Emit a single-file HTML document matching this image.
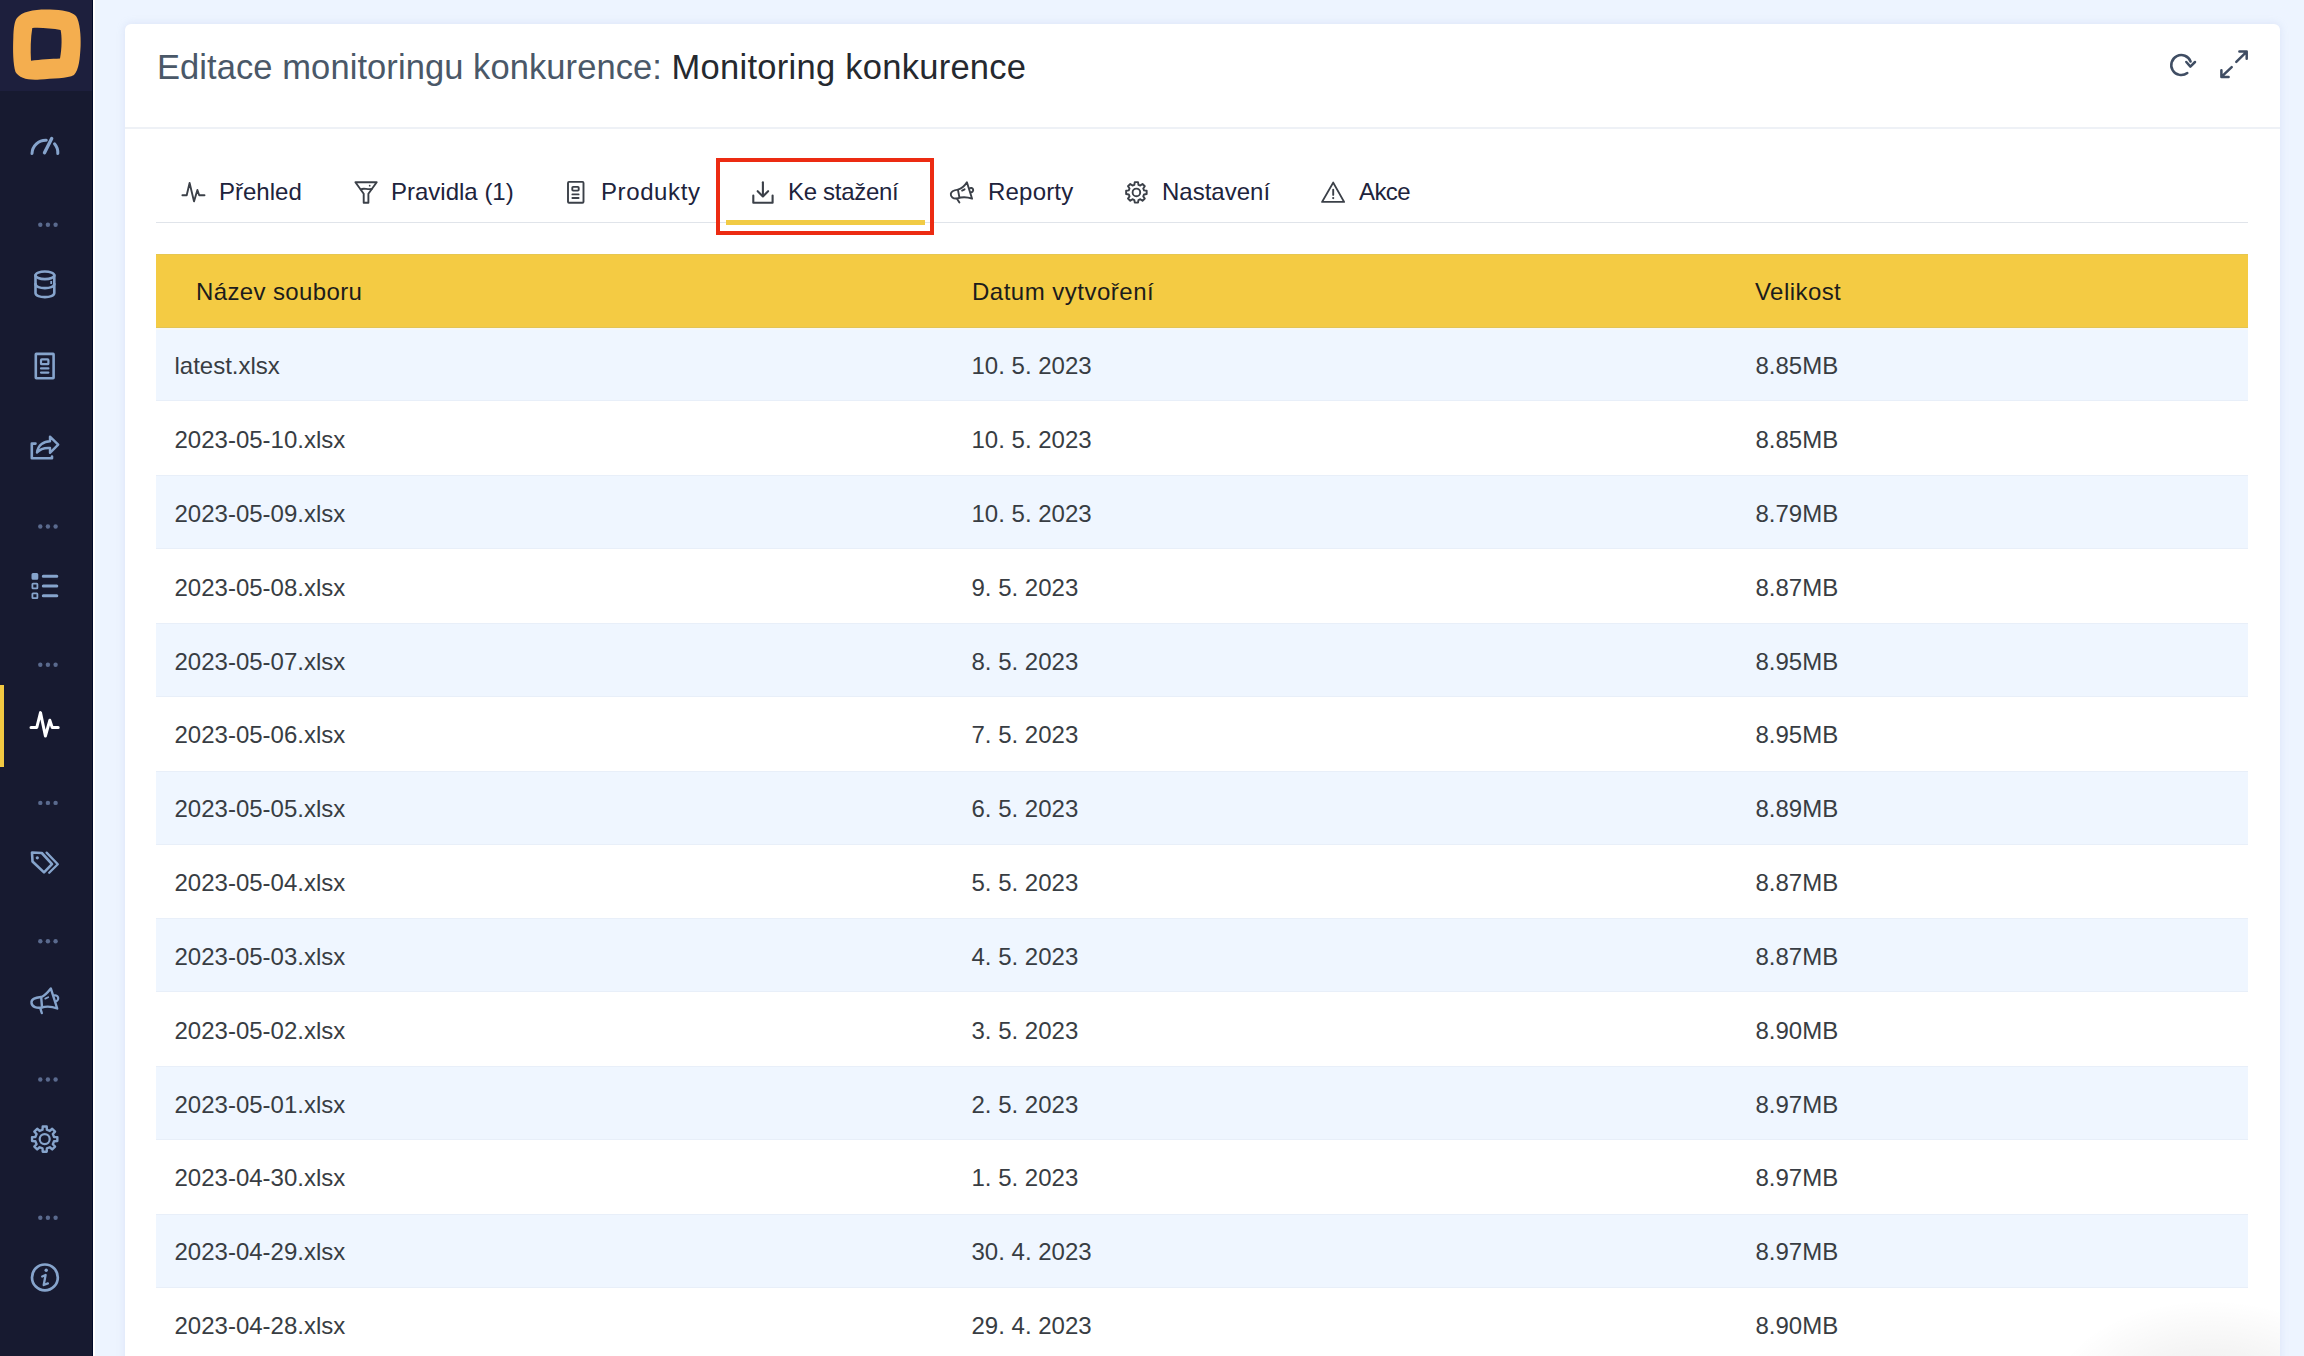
<!DOCTYPE html>
<html><head><meta charset="utf-8">
<style>
*{margin:0;padding:0;box-sizing:border-box}
html,body{width:2304px;height:1356px;overflow:hidden}
body{background:#edf4ff;font-family:"Liberation Sans",sans-serif;position:relative}
.abs{position:absolute}
#side{left:0;top:0;width:93px;height:1356px;background:#171a30}
#logoarea{left:0;top:0;width:93px;height:91px;background:#1d1f3d}
#sideedge{left:92px;top:0;width:1px;height:1356px;background:#000a2a}
#sidewhite{left:93px;top:0;width:2px;height:1356px;background:#ffffff}
#card{left:125px;top:24px;width:2155px;height:1400px;background:#fff;border-radius:6px;box-shadow:0 0 9px rgba(150,170,215,.22)}
#hdrline{left:125px;top:127px;width:2155px;height:2px;background:#eef1f6}
.title{left:157px;top:45px;font-size:34.5px;line-height:44px;white-space:pre;color:#4a5868;letter-spacing:0.08px}
.title b{font-weight:normal;color:#25292f;letter-spacing:0.27px}
.tab{top:176.5px;font-size:24px;line-height:30px;color:#20233c;white-space:pre}
#tabline{left:156px;top:221.5px;width:2092px;height:1.5px;background:#e0e4ea}
#tabul{left:726px;top:220px;width:199px;height:4.5px;background:#f1cb45}
#redbox{left:716px;top:158px;width:218px;height:77px;border:4px solid #ec2b12}
#thead{left:156px;top:254px;width:2092px;height:74px;background:#f4cb43;border-top:1px solid #e6c750;border-bottom:1px solid #e3c452}
.th{top:277px;font-size:24px;line-height:30px;color:#1c1c1c;white-space:pre}
.row{left:156px;width:2092px;height:73.85px}
.row.s{background:#eff6ff;border-top:1px solid #e8eff9;border-bottom:1px solid #e8eff9}
.td{font-size:24px;line-height:30px;color:#383d43;white-space:pre}
</style></head><body>
<div id="side" class="abs"></div>
<div id="logoarea" class="abs"></div>
<div id="sideedge" class="abs"></div>
<div id="sidewhite" class="abs"></div>
<svg class="abs" style="left:0;top:0" width="93" height="1356" viewBox="0 0 93 1356">
<!-- logo -->
<path fill="#f4ae4f" fill-rule="evenodd" d="M17,18 C22,11 36,9 50,9.5 C62,10 72,11.5 76,16 C80,22 81,36 80.6,46 C80,58 79,70 74,75 C68,78.5 52,78.5 40,79.5 C28,80.5 19,78 15.5,72 C13,64 12.8,50 13.3,38 C13.6,28 14.5,21 17,18 Z M32.3,28 C40,27.3 52,28.5 60.6,30 C62,36 62,48 60,58.5 C52,58.8 40,59.5 31,60.8 C30.4,50 30.6,38 32.3,28 Z"/>
<g fill="none" stroke="#86a4cc" stroke-width="3" stroke-linecap="round" stroke-linejoin="round">
<!-- speedometer -->
<path d="M32,153.5 A13.8,13.8 0 0 1 46.3,140.3"/>
<path d="M54.5,143.8 A13.8,13.8 0 0 1 57.8,153.5"/>
<path d="M44.5,152.8 L51.7,138.6" stroke-width="3.4"/>
</g>
<g fill="none" stroke="#86a4cc" stroke-width="2.6" stroke-linecap="round" stroke-linejoin="round">
<!-- database -->
<ellipse cx="44.9" cy="275.3" rx="9.4" ry="3.8"/>
<path d="M35.5,275.3 V293 C35.5,298.5 54.3,298.5 54.3,293 V275.3"/>
<path d="M35.5,284 C35.5,289.5 54.3,289.5 54.3,284"/>
<rect x="50.3" y="281" width="1.8" height="3" fill="#86a4cc" stroke="none"/>
<!-- document -->
<rect x="35.8" y="353.9" width="17.8" height="24.3" rx="0.5"/>
<rect x="41" y="359.4" width="7.4" height="4.8" rx="0.8" stroke-width="2.2"/>
<path d="M41,368.4 H48.4 M41,372.6 H48.4" stroke-width="2.2"/>
<!-- share -->
<path d="M35.5,443.6 H31.8 V458.2 H52 V456.5"/>
<path d="M37,452.6 C38,445 44,441.2 50,441.2 V436.6 L58.2,444.6 L50,452.8 V448 C44.5,447.6 40,449 37,452.6 Z" stroke-width="2.4"/>
<!-- list -->
<rect x="32.4" y="574" width="5" height="4.8" rx="0.6" fill="#86a4cc" stroke-width="1.8"/>
<rect x="32.4" y="583.6" width="5" height="4.8" rx="0.6" stroke-width="1.8"/>
<rect x="32.4" y="593.3" width="5" height="4.8" rx="0.6" stroke-width="1.8"/>
<path d="M43.3,576.3 H56.8 M43.3,586.1 H56.8 M43.3,595.8 H56.8" stroke-width="3"/>
<!-- tags -->
<path d="M32,852.5 L41.8,853 L52,864.2 L44,872.4 L32.5,861.5 Z"/>
<circle cx="37.3" cy="857.8" r="1.6" fill="#86a4cc" stroke="none"/>
<path d="M46.6,852.6 L57.8,864.3 L49.2,872.8" stroke-width="2.3"/>
<!-- megaphone -->
<path d="M41.2,997 C45,995.5 48,992 50.8,988.4 L57.2,1008.5 C52,1006.5 46,1006.3 41.5,1007.5 C37,1008.5 32,1007 31.5,1003 C31,998.5 36,997.8 41.2,997 Z" stroke-width="2.4"/>
<path d="M41.2,997.2 L42,1007.2" stroke-width="2.4"/>
<path d="M40.5,1008.8 L41.8,1013" stroke-width="2.4"/>
<path d="M54.6,995.4 A2.6,2.6 0 1 1 55.8,1001.3" stroke-width="2.2"/>
<path d="M45.3,998.6 L48.2,997.2" stroke-width="1.8"/>
<!-- gear -->
<circle cx="44.7" cy="1139.1" r="5" stroke-width="2.2"/>
<!-- info -->
<circle cx="44.9" cy="1277.4" r="12.9" stroke-width="2.7"/>
<circle cx="46.2" cy="1270.2" r="1.7" fill="#86a4cc" stroke="none"/>
<path d="M42.2,1276.5 L45.6,1275 L43.7,1285 L47.9,1283.4" stroke-width="2.3"/>
</g>
<!-- gear outer -->
<path id="gearp" fill="none" stroke="#86a4cc" stroke-width="2.4" stroke-linejoin="round" d="M42.54,1129.75 L42.70,1126.46 L46.70,1126.46 L46.86,1129.75 L49.79,1130.96 L52.22,1128.74 L55.06,1131.58 L52.84,1134.01 L54.05,1136.94 L57.34,1137.10 L57.34,1141.10 L54.05,1141.26 L52.84,1144.19 L55.06,1146.62 L52.22,1149.46 L49.79,1147.24 L46.86,1148.45 L46.70,1151.74 L42.70,1151.74 L42.54,1148.45 L39.61,1147.24 L37.18,1149.46 L34.34,1146.62 L36.56,1144.19 L35.35,1141.26 L32.06,1141.10 L32.06,1137.10 L35.35,1136.94 L36.56,1134.01 L34.34,1131.58 L37.18,1128.74 L39.61,1130.96 Z"/>
<!-- active bar + pulse -->
<rect x="0" y="685" width="4" height="82" fill="#f2c942"/>
<path d="M31,727.4 H36.8 L40.5,712.6 L45.4,736 L49.8,720.3 L52.2,727.4 H58.2" fill="none" stroke="#ffffff" stroke-width="3" stroke-linecap="round" stroke-linejoin="round"/>
<!-- dots -->
<g fill="#5a6a8e"><circle cx="40.3" cy="224.7" r="2.2"/><circle cx="47.9" cy="224.7" r="2.2"/><circle cx="55.6" cy="224.7" r="2.2"/><circle cx="40.3" cy="526.5" r="2.2"/><circle cx="47.9" cy="526.5" r="2.2"/><circle cx="55.6" cy="526.5" r="2.2"/><circle cx="40.3" cy="664.7" r="2.2"/><circle cx="47.9" cy="664.7" r="2.2"/><circle cx="55.6" cy="664.7" r="2.2"/><circle cx="40.3" cy="802.9" r="2.2"/><circle cx="47.9" cy="802.9" r="2.2"/><circle cx="55.6" cy="802.9" r="2.2"/><circle cx="40.3" cy="941.3" r="2.2"/><circle cx="47.9" cy="941.3" r="2.2"/><circle cx="55.6" cy="941.3" r="2.2"/><circle cx="40.3" cy="1079.5" r="2.2"/><circle cx="47.9" cy="1079.5" r="2.2"/><circle cx="55.6" cy="1079.5" r="2.2"/><circle cx="40.3" cy="1217.7" r="2.2"/><circle cx="47.9" cy="1217.7" r="2.2"/><circle cx="55.6" cy="1217.7" r="2.2"/></g>
</svg>

<div id="card" class="abs"></div>
<div id="hdrline" class="abs"></div>
<div class="abs" style="left:1900px;top:1200px;width:380px;height:156px;overflow:hidden"><div style="position:absolute;left:150px;top:100px;width:320px;height:200px;border-radius:50%;background:radial-gradient(closest-side,rgba(0,0,0,0.07),rgba(0,0,0,0.045) 50%,rgba(0,0,0,0))"></div></div>
<div class="abs title">Editace monitoringu konkurence: <b>Monitoring konkurence</b></div>

<!-- TABS -->
<div id="tabline" class="abs"></div>
<div id="tabul" class="abs"></div>
<div class="abs tab" style="left:219px">Přehled</div>
<div class="abs tab" style="left:391px">Pravidla (1)</div>
<div class="abs tab" style="left:601px;letter-spacing:0.6px">Produkty</div>
<div class="abs tab" style="left:788px;letter-spacing:-0.3px">Ke stažení</div>
<div class="abs tab" style="left:988px;letter-spacing:0.2px">Reporty</div>
<div class="abs tab" style="left:1162px">Nastavení</div>
<div class="abs tab" style="left:1359px;letter-spacing:-0.6px">Akce</div>
<div id="redbox" class="abs"></div>
<svg class="abs" style="left:0;top:0" width="2304" height="260" viewBox="0 0 2304 260">
<g fill="none" stroke="#3b4048" stroke-width="1.9" stroke-linecap="round" stroke-linejoin="round">
<!-- pulse -->
<path d="M182.4,195.2 H186.7 L189.6,183 L194,201.4 L197.4,190 L199.2,195.2 H204.5"/>
<!-- funnel -->
<path d="M355.4,182.2 H376.7 L368.4,193.8 V202.7 H363.7 V193.8 Z"/>
<path d="M360.8,189.3 C364,187.8 366.5,189.6 371.6,189"/>
<circle cx="369.7" cy="185.7" r="0.9" fill="#3b4048" stroke="none"/>
<!-- doc -->
<rect x="568" y="181.9" width="15.5" height="20.9" rx="1"/>
<rect x="572.3" y="186.9" width="6.4" height="3.7" rx="0.8"/>
<path d="M572.4,194.4 H578.6 M572.4,198 H578.6"/>
<!-- download -->
<path d="M762.9,182.2 V196" stroke-width="2.1"/>
<path d="M757.7,191.2 L762.9,196.4 L768.1,191.2" stroke-width="2.1"/>
<path d="M753.3,195.6 V202.7 H772.6 V195.6" stroke-width="2.1"/>
<!-- megaphone -->
<g transform="translate(950,181)">
<path d="M7.9,8.6 C11,7.8 14.5,5 16.9,1.2 L22.1,17.7 C17.5,16 12,15.8 7.5,17.3 C3,18.3 0.5,15.5 0.8,12.8 C1.2,10 4.5,9 7.9,8.6 Z"/>
<path d="M7.9,8.6 L9.4,16.4 M7.3,18.2 L9.4,21.5 M12.1,9.6 L14.6,8.3"/>
<path d="M19.6,7.4 A2.2,2.2 0 1 1 20.9,11.3"/>
</g>
<!-- gear -->
<path d="M1134.36,184.77 L1134.77,182.13 L1138.03,182.13 L1138.44,184.77 L1140.35,185.56 L1142.51,183.99 L1144.81,186.29 L1143.24,188.45 L1144.03,190.36 L1146.67,190.77 L1146.67,194.03 L1144.03,194.44 L1143.24,196.35 L1144.81,198.51 L1142.51,200.81 L1140.35,199.24 L1138.44,200.03 L1138.03,202.67 L1134.77,202.67 L1134.36,200.03 L1132.45,199.24 L1130.29,200.81 L1127.99,198.51 L1129.56,196.35 L1128.77,194.44 L1126.13,194.03 L1126.13,190.77 L1128.77,190.36 L1129.56,188.45 L1127.99,186.29 L1130.29,183.99 L1132.45,185.56 Z"/>
<circle cx="1136.4" cy="192.4" r="3.8"/>
<!-- warning -->
<path d="M1333.2,182.6 L1344.1,201.9 H1322.1 Z"/>
<path d="M1333.2,189.7 V194.9"/>
<circle cx="1333.2" cy="198.1" r="1.1" fill="#3b4048" stroke="none"/>
</g>
<g fill="none" stroke="#3f4d63" stroke-width="2.5" stroke-linecap="round" stroke-linejoin="round">
<!-- refresh -->
<path d="M2187.3,73 A10,10 0 1 1 2190.6,61.5"/>
<path d="M2186.3,62 L2190.4,66.6 L2195,62"/>
<!-- expand -->
<path d="M2239.4,51.6 H2246.7 V58.8 M2246.2,52.1 L2236.3,61.9"/>
<path d="M2228.6,76.9 H2221.4 V70.2 M2221.9,76.4 L2231.7,67.1"/>
</g>
</svg>

<!-- TABLE -->
<div id="thead" class="abs"></div>
<div class="abs th" style="left:196px;letter-spacing:0.37px">Název souboru</div>
<div class="abs th" style="left:972px;letter-spacing:0.5px">Datum vytvoření</div>
<div class="abs th" style="left:1755px;letter-spacing:0.44px">Velikost</div>
<!--ROWS-->
<div class="abs row s" style="top:327.60px;border-top:2px solid #f6f8f6;top:327.60px"></div>
<div class="abs td" style="left:174.5px;top:351.10px">latest.xlsx</div>
<div class="abs td" style="left:971.5px;top:351.10px">10. 5. 2023</div>
<div class="abs td" style="left:1755.5px;top:351.10px">8.85MB</div>
<div class="abs row" style="top:401.45px"></div>
<div class="abs td" style="left:174.5px;top:424.95px">2023-05-10.xlsx</div>
<div class="abs td" style="left:971.5px;top:424.95px">10. 5. 2023</div>
<div class="abs td" style="left:1755.5px;top:424.95px">8.85MB</div>
<div class="abs row s" style="top:475.30px"></div>
<div class="abs td" style="left:174.5px;top:498.80px">2023-05-09.xlsx</div>
<div class="abs td" style="left:971.5px;top:498.80px">10. 5. 2023</div>
<div class="abs td" style="left:1755.5px;top:498.80px">8.79MB</div>
<div class="abs row" style="top:549.15px"></div>
<div class="abs td" style="left:174.5px;top:572.65px">2023-05-08.xlsx</div>
<div class="abs td" style="left:971.5px;top:572.65px">9. 5. 2023</div>
<div class="abs td" style="left:1755.5px;top:572.65px">8.87MB</div>
<div class="abs row s" style="top:623.00px"></div>
<div class="abs td" style="left:174.5px;top:646.50px">2023-05-07.xlsx</div>
<div class="abs td" style="left:971.5px;top:646.50px">8. 5. 2023</div>
<div class="abs td" style="left:1755.5px;top:646.50px">8.95MB</div>
<div class="abs row" style="top:696.85px"></div>
<div class="abs td" style="left:174.5px;top:720.35px">2023-05-06.xlsx</div>
<div class="abs td" style="left:971.5px;top:720.35px">7. 5. 2023</div>
<div class="abs td" style="left:1755.5px;top:720.35px">8.95MB</div>
<div class="abs row s" style="top:770.70px"></div>
<div class="abs td" style="left:174.5px;top:794.20px">2023-05-05.xlsx</div>
<div class="abs td" style="left:971.5px;top:794.20px">6. 5. 2023</div>
<div class="abs td" style="left:1755.5px;top:794.20px">8.89MB</div>
<div class="abs row" style="top:844.55px"></div>
<div class="abs td" style="left:174.5px;top:868.05px">2023-05-04.xlsx</div>
<div class="abs td" style="left:971.5px;top:868.05px">5. 5. 2023</div>
<div class="abs td" style="left:1755.5px;top:868.05px">8.87MB</div>
<div class="abs row s" style="top:918.40px"></div>
<div class="abs td" style="left:174.5px;top:941.90px">2023-05-03.xlsx</div>
<div class="abs td" style="left:971.5px;top:941.90px">4. 5. 2023</div>
<div class="abs td" style="left:1755.5px;top:941.90px">8.87MB</div>
<div class="abs row" style="top:992.25px"></div>
<div class="abs td" style="left:174.5px;top:1015.75px">2023-05-02.xlsx</div>
<div class="abs td" style="left:971.5px;top:1015.75px">3. 5. 2023</div>
<div class="abs td" style="left:1755.5px;top:1015.75px">8.90MB</div>
<div class="abs row s" style="top:1066.10px"></div>
<div class="abs td" style="left:174.5px;top:1089.60px">2023-05-01.xlsx</div>
<div class="abs td" style="left:971.5px;top:1089.60px">2. 5. 2023</div>
<div class="abs td" style="left:1755.5px;top:1089.60px">8.97MB</div>
<div class="abs row" style="top:1139.95px"></div>
<div class="abs td" style="left:174.5px;top:1163.45px">2023-04-30.xlsx</div>
<div class="abs td" style="left:971.5px;top:1163.45px">1. 5. 2023</div>
<div class="abs td" style="left:1755.5px;top:1163.45px">8.97MB</div>
<div class="abs row s" style="top:1213.80px"></div>
<div class="abs td" style="left:174.5px;top:1237.30px">2023-04-29.xlsx</div>
<div class="abs td" style="left:971.5px;top:1237.30px">30. 4. 2023</div>
<div class="abs td" style="left:1755.5px;top:1237.30px">8.97MB</div>
<div class="abs row" style="top:1287.65px"></div>
<div class="abs td" style="left:174.5px;top:1311.15px">2023-04-28.xlsx</div>
<div class="abs td" style="left:971.5px;top:1311.15px">29. 4. 2023</div>
<div class="abs td" style="left:1755.5px;top:1311.15px">8.90MB</div>
</body></html>
